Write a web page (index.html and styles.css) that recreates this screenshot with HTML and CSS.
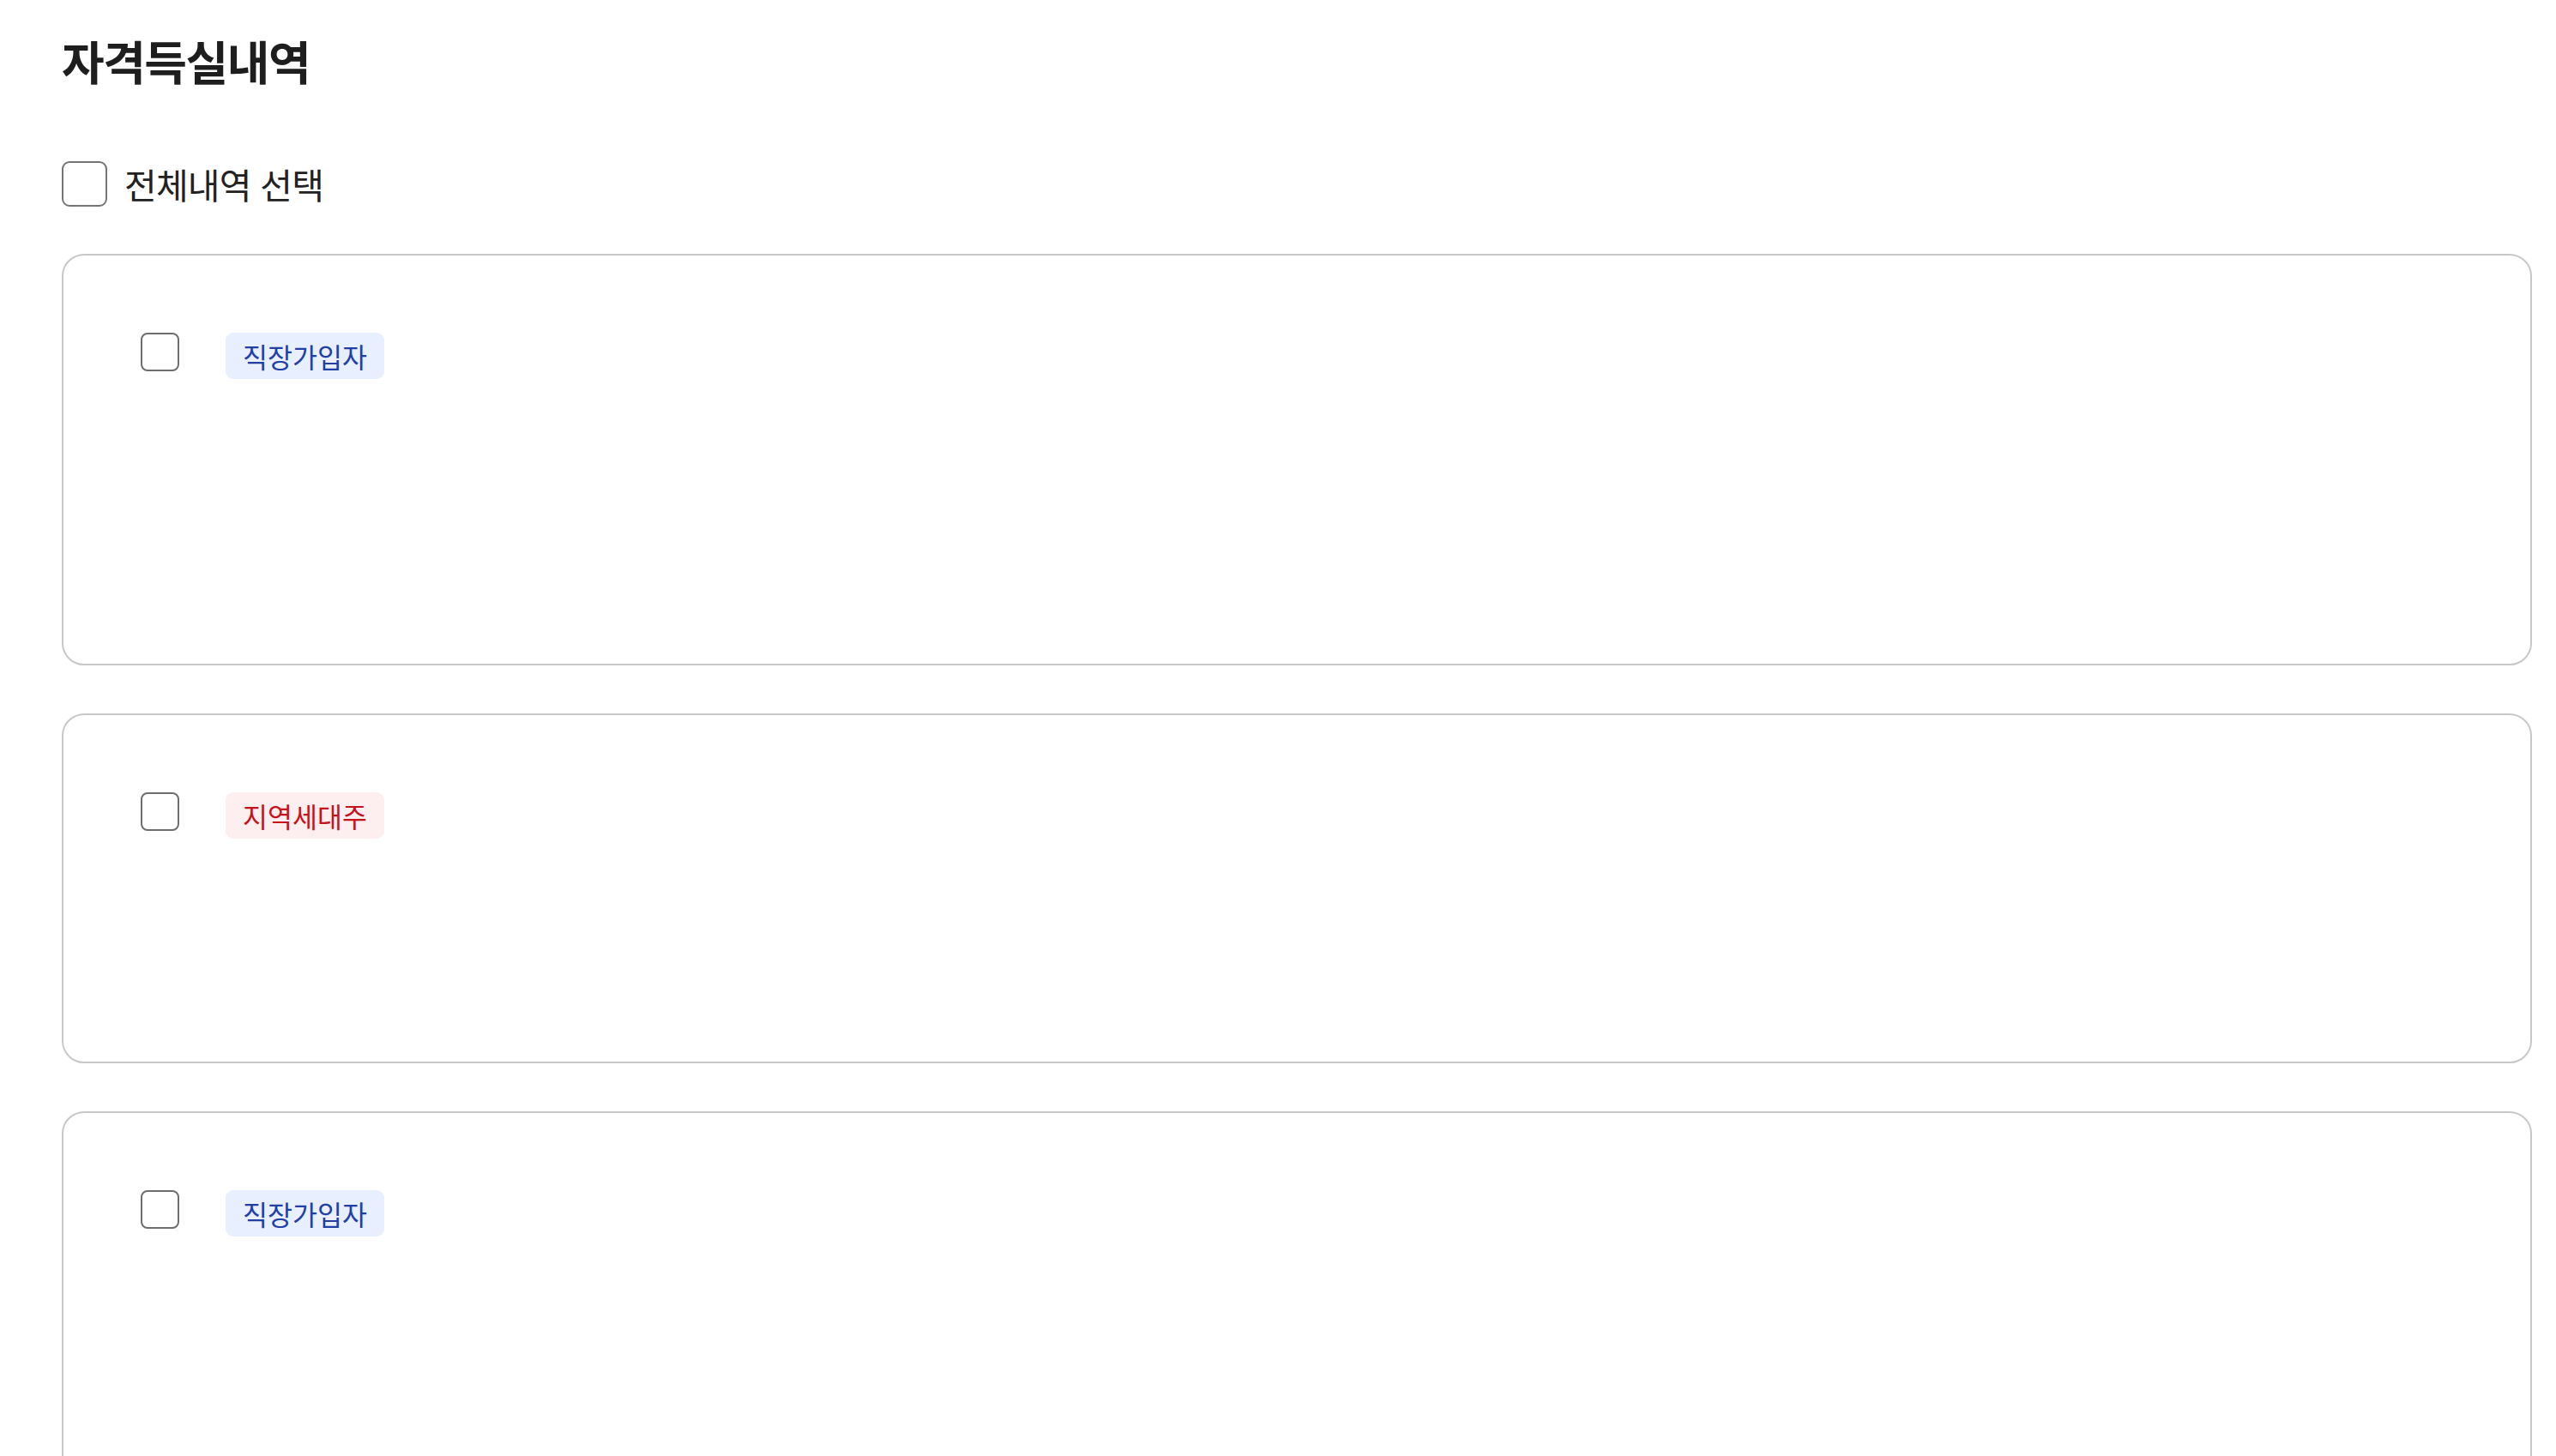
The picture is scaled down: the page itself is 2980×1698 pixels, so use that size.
FILE: index.html
```html
<!DOCTYPE html>
<html lang="ko">
<head>
<meta charset="utf-8">
<title>자격득실내역</title>
<link rel="stylesheet" href="styles.css">
</head>
<body>
<main class="page">
  <h1 class="title">자격득실내역</h1>
  <label class="select-all">
    <input type="checkbox" class="check check--lg">
    <span class="select-all__text">전체내역 선택</span>
  </label>
  <ul class="list">
    <li class="card card--tall">
      <div class="card__head">
        <input type="checkbox" class="check">
        <span class="badge badge--blue">직장가입자</span>
      </div>
    </li>
    <li class="card card--short">
      <div class="card__head">
        <input type="checkbox" class="check">
        <span class="badge badge--red">지역세대주</span>
      </div>
    </li>
    <li class="card card--tall">
      <div class="card__head">
        <input type="checkbox" class="check">
        <span class="badge badge--blue">직장가입자</span>
      </div>
    </li>
  </ul>
</main>
</body>
</html>
```

FILE: styles.css
```css
html, body {
  margin: 0;
  padding: 0;
  background: #ffffff;
}
body {
  font-family: "Noto Sans CJK KR", "Noto Sans", sans-serif;
  color: #222222;
  overflow: hidden;
}
.page {
  padding: 36px 28px 0 72px;
}
.title {
  margin: 0;
  font-size: 54px;
  line-height: 70px;
  font-weight: 700;
  letter-spacing: -1.5px;
  color: #1e1e1e;
}
.select-all {
  margin-top: 81px;
  display: flex;
  align-items: center;
  gap: 20px;
  height: 54px;
}
.select-all__text {
  font-size: 41px;
  line-height: 54px;
  letter-spacing: -0.8px;
  color: #222222;
}
.check {
  appearance: none;
  -webkit-appearance: none;
  margin: 0;
  flex: none;
  width: 45px;
  height: 45px;
  border: 2px solid #6e6e6e;
  border-radius: 8px;
  background: #ffffff;
  box-sizing: border-box;
}
.check--lg {
  width: 53px;
  height: 53px;
  border-color: #757575;
  border-radius: 9px;
}
.list {
  list-style: none;
  margin: 55px 0 0;
  padding: 0;
  display: flex;
  flex-direction: column;
  gap: 56px;
}
.card {
  box-sizing: border-box;
  border: 2px solid #c8c8c8;
  border-radius: 26px;
  padding: 90px 90px;
}
.card--tall {
  height: 480px;
}
.card--short {
  height: 408px;
}
.card__head {
  display: flex;
  align-items: flex-start;
  gap: 54px;
}
.badge {
  display: inline-block;
  height: 54px;
  padding: 0 20px;
  box-sizing: border-box;
  border-radius: 9px;
  font-size: 31.5px;
  line-height: 54px;
  white-space: nowrap;
}
.badge--blue {
  background: #e8efff;
  color: #2140a6;
}
.badge--red {
  background: #fdeeef;
  color: #c5121c;
}
```
